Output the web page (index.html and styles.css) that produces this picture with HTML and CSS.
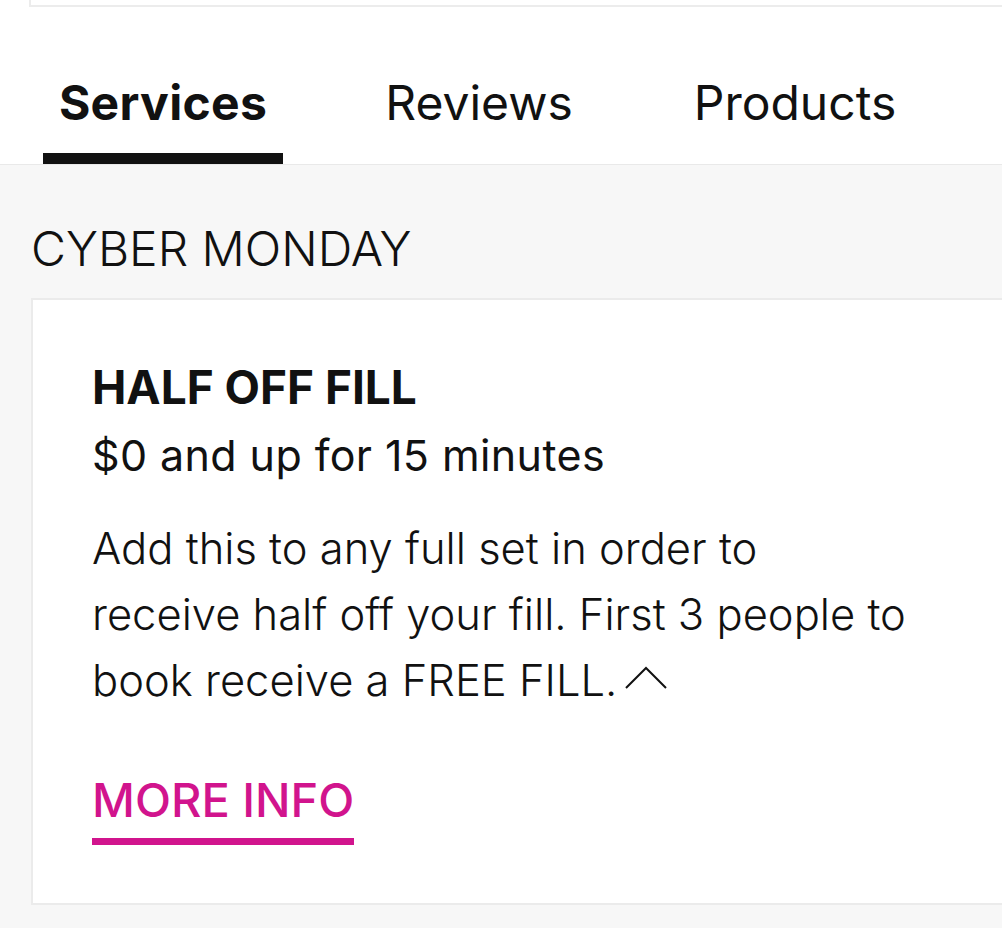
FILE: index.html
```html
<!DOCTYPE html>
<html>
<head>
<meta charset="utf-8">
<link rel="stylesheet" href="styles.css">
</head>
<body>
<div class="top-area">
  <div class="prev-card"></div>
  <nav class="tabs">
    <div class="tab active">Services</div>
    <div class="tab">Reviews</div>
    <div class="tab">Products</div>
  </nav>
</div>
<main class="content">
  <h2 class="section-title">CYBER MONDAY</h2>
  <section class="card">
    <h3 class="service-name">HALF OFF FILL</h3>
    <div class="service-price">$0 and up for 15 minutes</div>
    <p class="service-desc">Add this to any full set in order to receive half off your fill. First 3 people to book receive a FREE FILL. <svg class="caret" width="44" height="24" viewBox="0 0 44 24"><polyline points="2,22 22,2 42,22" fill="none" stroke="#111" stroke-width="2"/></svg></p>
    <a class="more-info">MORE INFO</a>
  </section>
</main>
</body>
</html>
```
FILE: styles.css
```css
* { box-sizing: border-box; }
html, body { margin: 0; padding: 0; }
body {
  width: 1002px;
  height: 928px;
  overflow: hidden;
  background: #f7f7f7;
  font-family: Inter, "Liberation Sans", sans-serif;
  color: #111;
}
.top-area {
  background: #fff;
}
.prev-card {
  height: 7px;
  margin-left: 29px;
  border-left: 2px solid #ececec;
  border-bottom: 2px solid #ececec;
}
.tabs {
  display: flex;
  padding-left: 5px;
  height: 158px;
  border-bottom: 1px solid #e9e9e9;
}
.tab {
  width: 316px;
  display: flex;
  justify-content: center;
  padding-top: 68px;
  font-size: 48px;
  line-height: 56px;
  font-weight: 400;
  color: #111;
  position: relative;
}
.tab.active {
  font-weight: 700;
  letter-spacing: 0.3px;
}
.tab.active::after {
  content: "";
  position: absolute;
  left: 38px;
  right: 38px;
  bottom: 0;
  height: 11px;
  background: #111;
}
.content {
  padding: 0 0 0 31px;
}
.section-title {
  margin: 0;
  padding-top: 56px;
  padding-bottom: 21px;
  font-size: 48px;
  line-height: 56px;
  font-weight: 300;
  color: #111;
}
.card {
  background: #fff;
  border: 2px solid #ebebeb;
  border-right: none;
  padding: 60px 0 0 59px;
  height: 607px;
}
.service-name {
  margin: 0;
  font-size: 46px;
  line-height: 54px;
  font-weight: 700;
}
.service-price {
  margin-top: 15px;
  font-size: 43px;
  line-height: 52px;
  font-weight: 400;
  letter-spacing: 0.4px;
}
.service-desc {
  margin: 34px 0 0;
  width: 818px;
  font-size: 43.5px;
  line-height: 66px;
  font-weight: 300;
}
.caret {
  vertical-align: 6px;
  margin-left: -6px;
}
.more-info {
  display: inline-block;
  margin-top: 62px;
  font-size: 47px;
  line-height: 50px;
  font-weight: 500;
  color: #d1148d;
  padding-bottom: 13px;
  border-bottom: 7px solid #d1148d;
}
```
